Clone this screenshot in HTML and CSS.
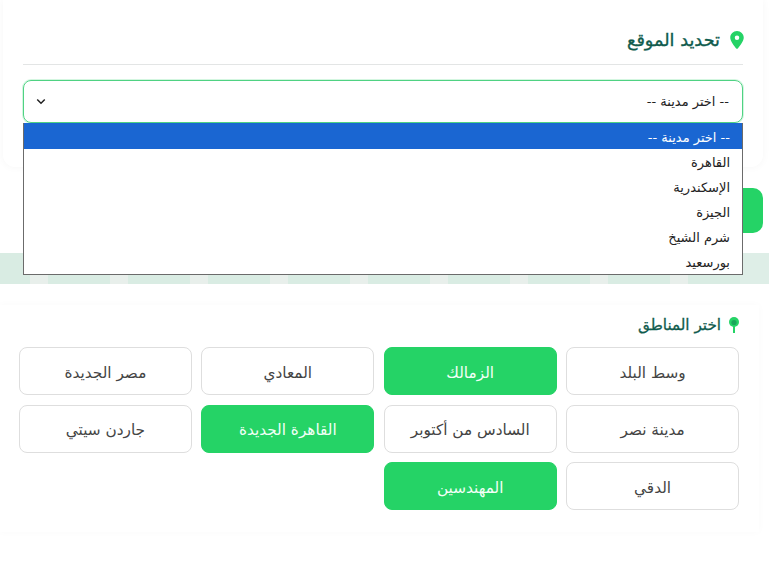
FILE: index.html
```html
<!DOCTYPE html>
<html lang="ar" dir="rtl">
<head>
<meta charset="utf-8">
<title>تحديد الموقع</title>
<link rel="stylesheet" href="styles.css">
</head>
<body>
<main class="page">
  <section class="card">
    <h2 class="card-title">
      <svg class="pin" viewBox="0 0 384 512" aria-hidden="true"><path fill-rule="evenodd" d="M192 0C86 0 0 84 0 190c0 88 117 243 168 307 13 15 35 15 48 0 51-64 168-219 168-307C384 84 298 0 192 0zm0 256a64 64 0 1 1 0-128 64 64 0 0 1 0 128z"/></svg>
      <span>تحديد الموقع</span>
    </h2>
    <div class="select-wrap">
      <div class="select">
        <span>-- اختر مدينة --</span>
        <svg class="chev" viewBox="0 0 12 8" aria-hidden="true"><path d="M1.500 1.500 6 6l4.500-4.500"/></svg>
      </div>
      <ul class="options">
        <li class="active">-- اختر مدينة --</li>
        <li>القاهرة</li>
        <li>الإسكندرية</li>
        <li>الجيزة</li>
        <li>شرم الشيخ</li>
        <li>بورسعيد</li>
      </ul>
    </div>
  </section>
  <div class="cta"></div>
  <div class="banner"></div>
  <section class="areas">
    <h3 class="areas-title">
      <svg class="tack" viewBox="0 0 10 16" aria-hidden="true"><rect x="4" y="8" width="2" height="8"/><circle cx="5" cy="5" r="5"/><circle class="shade" cx="5" cy="5.500" r="2.600"/></svg>
      <span>اختر المناطق</span>
    </h3>
    <div class="grid">
      <button class="chip">وسط البلد</button>
      <button class="chip on">الزمالك</button>
      <button class="chip">المعادي</button>
      <button class="chip">مصر الجديدة</button>
      <button class="chip">مدينة نصر</button>
      <button class="chip">السادس من أكتوبر</button>
      <button class="chip on">القاهرة الجديدة</button>
      <button class="chip">جاردن سيتي</button>
      <button class="chip">الدقي</button>
      <button class="chip on">المهندسين</button>
    </div>
  </section>
</main>
</body>
</html>
```
FILE: styles.css
```css
* { box-sizing: border-box; }
html, body { margin: 0; background: #fff; }
body { font-family: "DejaVu Sans", "Noto Sans", sans-serif; overflow: hidden; }
.page { width: 778px; height: 562px; display: flex; flex-direction: column; overflow: hidden; }
.card {
  width: 760px; height: 167px; margin-right: 15px; padding: 28px 20px 0;
  background: #fff; border-radius: 0 0 12px 12px;
  box-shadow: 0 0 8px rgba(0,0,0,.04);
  flex: none;
}
.card-title {
  display: flex; align-items: center; gap: 10px; height: 37px; margin: 0 0 15px;
  padding-bottom: 13px;
  border-bottom: 1px solid #e3e5e5; color: #0f5b4d;
  font-size: 17.7px; font-weight: 400; -webkit-text-stroke: .35px #0f5b4d;
}
.pin { width: 14px; height: 18px; fill: #25d366; margin-right: -1px; }
.select-wrap { position: relative; }
.select {
  display: flex; justify-content: space-between; align-items: center;
  height: 43px; padding: 0 13px 0 12px;
  border: 1px solid #4fd283; border-radius: 8px;
  box-shadow: 0 0 0 1px rgba(37,211,102,.2);
  font-size: 13px; color: #222;
}
.chev { width: 10px; height: 7px; fill: none; stroke: #222; stroke-width: 1.800; }
.options {
  position: absolute; top: 43px; left: 0; right: 0; z-index: 2;
  margin: 0; padding: 0; list-style: none; background: #fff;
  border: 1px solid #6b6b6b; border-top: 0; height: 152px;
  font-size: 13px; color: #222;
}
.options li { height: 25px; line-height: 25px; padding: 1px 12px 0; }
.options li.active { background: #1a66d2; color: #fff; height: 26px; padding-top: 2px; }
.cta {
  flex: none; width: 300px; height: 45px; margin: 21px 15px 0 0;
  background: #25d366; border-radius: 10px;
}
.banner {
  flex: none; width: 769px; height: 31px; margin: 20px 9px 0 0;
  background:
    linear-gradient(90deg, transparent 740px, #deeee7 740px),
    repeating-linear-gradient(90deg, #d9ece3 0 30px, #e8efeb 30px 48px, #d9ece3 48px 80px);
}
.areas {
  flex: none; width: 760px; height: 227px; margin: 21px 19px 0 0; padding: 10px 20px 0;
  box-shadow: 0 0 8px rgba(0,0,0,.025);
}
.areas-title {
  display: flex; align-items: center; gap: 8px; margin: 0 0 12px; height: 20px;
  font-size: 15.2px; font-weight: 400; color: #0f5b4d; -webkit-text-stroke: .3px #0f5b4d;
}
.tack { width: 10px; height: 16px; fill: #25d366; }
.shade { fill: #1ba55a; }
.grid { display: grid; grid-template-columns: repeat(4, 1fr); gap: 9.6px; }
.chip {
  height: 48px; padding: 3px 0 0; background: #fff; color: #444;
  border: 1px solid #dedede; border-radius: 8px;
  font: 15.3px "DejaVu Sans", "Noto Sans", sans-serif;
}
.chip.on { background: #25d366; border-color: #25d366; color: #f2fff7; }
```
